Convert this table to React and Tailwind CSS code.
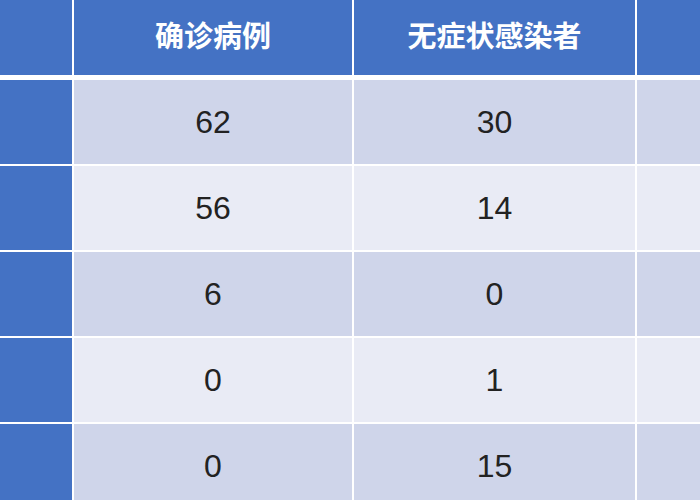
import React from 'react'

const rows = [
  { a: '62', b: '30', tone: 'odd' },
  { a: '56', b: '14', tone: 'even' },
  { a: '6', b: '0', tone: 'odd' },
  { a: '0', b: '1', tone: 'even' },
  { a: '0', b: '15', tone: 'odd' },
]

export default function App() {
  return (
    <div className="w-[700px] h-[500px] overflow-hidden bg-white font-['Liberation_Sans','Noto_Sans_CJK_SC',sans-serif]">
      <div className="flex gap-[2px] h-[75px]">
        <div className="w-[72px] shrink-0 bg-[#4472c4]" />
        <div className="w-[278px] shrink-0 bg-[#4472c4] flex items-center justify-center text-white font-bold text-[29px]">
          确诊病例
        </div>
        <div className="w-[281px] shrink-0 bg-[#4472c4] flex items-center justify-center text-white font-bold text-[29px]">
          无症状感染者
        </div>
        <div className="flex-1 bg-[#4472c4]" />
      </div>
      <div className="mt-[5px] flex flex-col gap-[2px]">
        {rows.map((r, i) => {
          const bg = r.tone === 'odd' ? 'bg-[#cfd5ea]' : 'bg-[#e9ebf5]'
          return (
            <div key={i} className="flex gap-[2px] h-[84px]">
              <div className="w-[72px] shrink-0 bg-[#4472c4]" />
              <div className={`w-[278px] shrink-0 ${bg} flex items-center justify-center text-[32px] text-[#222222]`}>
                {r.a}
              </div>
              <div className={`w-[281px] shrink-0 ${bg} flex items-center justify-center text-[32px] text-[#222222]`}>
                {r.b}
              </div>
              <div className={`flex-1 ${bg}`} />
            </div>
          )
        })}
      </div>
    </div>
  )
}
